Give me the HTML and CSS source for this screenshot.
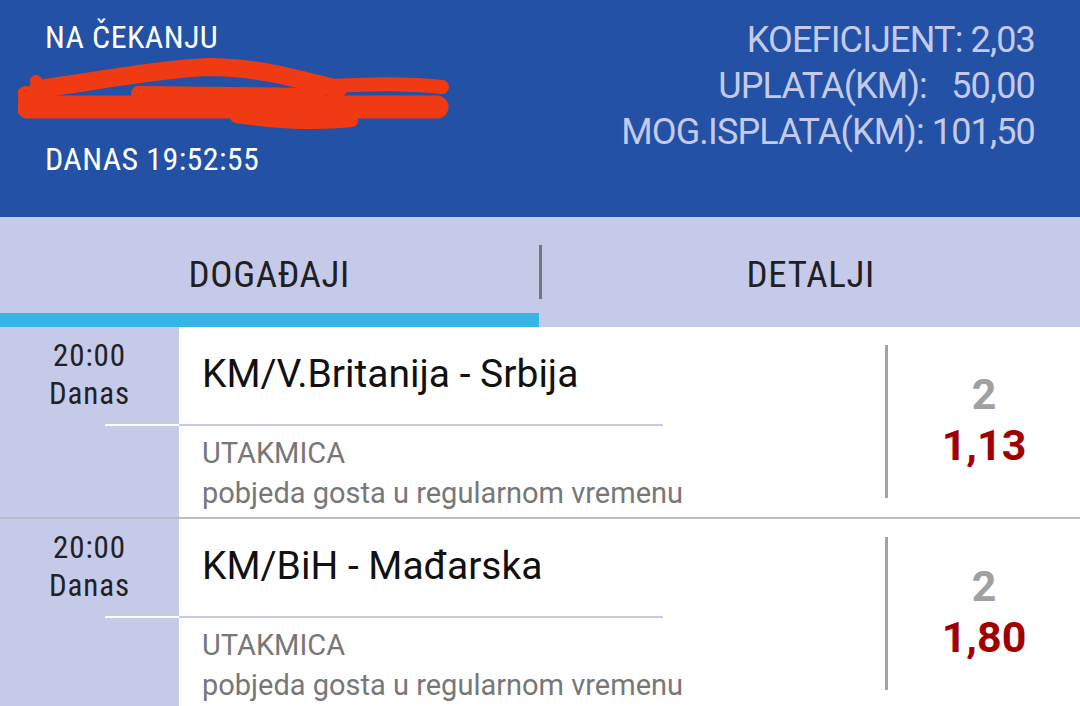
FILE: index.html
```html
<!DOCTYPE html>
<html lang="bs">
<head>
<meta charset="utf-8">
<title>Tiket</title>
<link rel="stylesheet" href="styles.css">
</head>
<body>
<div class="app">
  <header class="header">
    <div class="header-left">
      <div class="status">NA ČEKANJU</div>
      <svg class="redact" width="440" height="82" viewBox="0 0 440 82" aria-hidden="true">
        <g fill="none" stroke="#f03a14" stroke-linecap="round" stroke-linejoin="round">
          <path d="M10 50 L419 50" stroke-width="23"/>
          <path d="M20 32 C80 24 140 12 190 10 C240 10 280 22 320 32" stroke-width="18"/>
          <path d="M120 36 L300 38" stroke-width="14"/>
          <path d="M300 30 C340 27 390 26 424 30" stroke-width="14"/>
          <path d="M218 60 C260 66 300 68 334 64" stroke-width="12"/>
          <path d="M8 38 L16 44" stroke-width="18"/>
          <path d="M18 24 L24 32" stroke-width="12"/>
        </g>
      </svg>
      <div class="date">DANAS 19:52:55</div>
    </div>
    <div class="header-right">
      <div class="stat">KOEFICIJENT: 2,03</div>
      <div class="stat">UPLATA(KM):   50,00</div>
      <div class="stat">MOG.ISPLATA(KM): 101,50</div>
    </div>
  </header>

  <nav class="tabs">
    <div class="tab active"><span class="tab-label">DOGAĐAJI</span><span class="tab-indicator"></span></div>
    <div class="tab-divider"></div>
    <div class="tab"><span class="tab-label">DETALJI</span></div>
  </nav>

  <section class="events">
    <div class="event">
      <div class="event-time">
        <div class="time">20:00</div>
        <div class="day">Danas</div>
        <div class="time-line"></div>
      </div>
      <div class="event-body">
        <div class="event-main">
          <div class="event-title">KM/V.Britanija - Srbija</div>
          <div class="event-line"></div>
          <div class="event-market">UTAKMICA</div>
          <div class="event-pick">pobjeda gosta u regularnom vremenu</div>
        </div>
        <div class="event-vline"></div>
        <div class="event-odds">
          <div class="odds-tip">2</div>
          <div class="odds-value">1,13</div>
        </div>
      </div>
    </div>

    <div class="event">
      <div class="event-time">
        <div class="time">20:00</div>
        <div class="day">Danas</div>
        <div class="time-line"></div>
      </div>
      <div class="event-body">
        <div class="event-main">
          <div class="event-title">KM/BiH - Mađarska</div>
          <div class="event-line"></div>
          <div class="event-market">UTAKMICA</div>
          <div class="event-pick">pobjeda gosta u regularnom vremenu</div>
        </div>
        <div class="event-vline"></div>
        <div class="event-odds">
          <div class="odds-tip">2</div>
          <div class="odds-value">1,80</div>
        </div>
      </div>
    </div>
  </section>
</div>
</body>
</html>
```
FILE: styles.css
```css
html, body {
  margin: 0;
  padding: 0;
  background: #ffffff;
}
body {
  width: 1080px;
  height: 706px;
  overflow: hidden;
  font-family: Roboto, "Noto Sans", sans-serif;
}
.app {
  display: flex;
  flex-direction: column;
}

/* header */
.header {
  height: 217px;
  flex: none;
  box-sizing: border-box;
  background: #2251a6;
  display: flex;
  justify-content: space-between;
  padding: 17px 45px 0 45px;
  overflow: hidden;
}
.header-left {
  display: flex;
  flex-direction: column;
  color: #ffffff;
  font-size: 32px;
  line-height: 40px;
  font-stretch: 75%;
  letter-spacing: 0.4px;
}
.redact {
  display: block;
  margin-left: -27px;
}
.header-right {
  color: #c5cae9;
  font-size: 36px;
  line-height: 46px;
  letter-spacing: -0.85px;
  text-align: right;
}
.stat {
  white-space: pre;
}

/* tabs */
.tabs {
  height: 110px;
  flex: none;
  background: #c5cae9;
  display: flex;
}
.tab {
  flex: 1;
  display: flex;
  flex-direction: column;
}
.tab-label {
  display: block;
  height: 96px;
  box-sizing: border-box;
  padding-top: 30px;
  line-height: 56px;
  text-align: center;
  font-size: 37px;
  font-stretch: 75%;
  letter-spacing: 0.65px;
  color: #1f2024;
}
.tab-indicator {
  display: block;
  height: 14px;
  background: #36b4e5;
}
.tab-divider {
  width: 3px;
  height: 54px;
  margin-top: 28px;
  background: #76777c;
}

/* events */
.event {
  display: flex;
  height: 192px;
  box-sizing: border-box;
  border-bottom: 2px solid #bdbdbd;
}
.event-time {
  width: 179px;
  flex: none;
  background: #c5cae9;
  box-sizing: border-box;
  padding-top: 10px;
  display: flex;
  flex-direction: column;
  align-items: center;
  color: #222226;
  font-size: 31px;
  line-height: 38px;
  font-stretch: 75%;
  letter-spacing: 0.9px;
}
.time-line {
  align-self: flex-end;
  width: 74px;
  height: 2px;
  margin-top: 11px;
  background: #ffffff;
}
.event-body {
  flex: 1;
  display: flex;
  background: #ffffff;
}
.event-main {
  width: 706px;
  flex: none;
}
.event-title {
  height: 97px;
  box-sizing: border-box;
  padding: 24px 0 0 23px;
  font-size: 39px;
  line-height: 46px;
  color: #111111;
}
.event-line {
  width: 484px;
  height: 2px;
  background: #c5cae9;
}
.event-market,
.event-pick {
  padding-left: 23px;
  font-size: 29px;
  line-height: 40px;
  color: #777777;
}
.event-market {
  margin-top: 7px;
}
.event-vline {
  width: 3px;
  margin: 18px 0 19px 0;
  background: #a3a3a3;
}
.event-odds {
  flex: 1;
  box-sizing: border-box;
  padding-top: 42px;
  text-align: center;
  font-weight: 700;
  font-size: 43px;
  line-height: 51px;
}
.odds-tip {
  color: #a0a0a0;
}
.odds-value {
  color: #a10000;
}
```
